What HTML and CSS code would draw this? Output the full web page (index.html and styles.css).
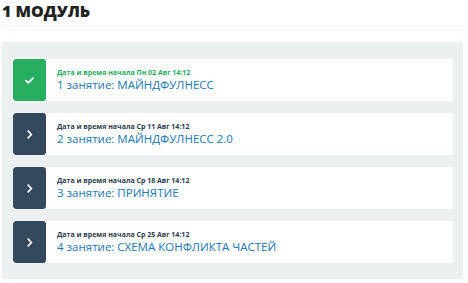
FILE: index.html
```html
<!DOCTYPE html>
<html lang="ru">
<head>
  <meta charset="UTF-8" />
  <title>1 модуль</title>
  <link rel="stylesheet" href="styles.css">
</head>
<body>
  <div class="module">
    <h2 class="module-title">1 МОДУЛЬ</h2>
    <div class="lessons">
      <a class="lesson done" href="#">
        <div class="lesson-icon">
          <svg width="9" height="7" viewBox="0 0 9 7"><path d="M1 3.6l2.3 2.2L8 1.2" fill="none" stroke="#fff" stroke-width="1.8" stroke-linecap="round" stroke-linejoin="round"/></svg>
        </div>
        <div class="lesson-body">
          <div class="lesson-date">Дата и время начала Пн 02 Авг 14:12</div>
          <div class="lesson-name">1 занятие: МАЙНДФУЛНЕСС</div>
        </div>
      </a>
      <a class="lesson" href="#">
        <div class="lesson-icon">
          <svg width="6" height="9" viewBox="0 0 6 9"><path d="M1.2 1.2l3.2 3.3-3.2 3.3" fill="none" stroke="#fff" stroke-width="1.7" stroke-linecap="round" stroke-linejoin="round"/></svg>
        </div>
        <div class="lesson-body">
          <div class="lesson-date">Дата и время начала Ср 11 Авг 14:12</div>
          <div class="lesson-name">2 занятие: МАЙНДФУЛНЕСС 2.0</div>
        </div>
      </a>
      <a class="lesson" href="#">
        <div class="lesson-icon">
          <svg width="6" height="9" viewBox="0 0 6 9"><path d="M1.2 1.2l3.2 3.3-3.2 3.3" fill="none" stroke="#fff" stroke-width="1.7" stroke-linecap="round" stroke-linejoin="round"/></svg>
        </div>
        <div class="lesson-body">
          <div class="lesson-date">Дата и время начала Ср 18 Авг 14:12</div>
          <div class="lesson-name">3 занятие: ПРИНЯТИЕ</div>
        </div>
      </a>
      <a class="lesson" href="#">
        <div class="lesson-icon">
          <svg width="6" height="9" viewBox="0 0 6 9"><path d="M1.2 1.2l3.2 3.3-3.2 3.3" fill="none" stroke="#fff" stroke-width="1.7" stroke-linecap="round" stroke-linejoin="round"/></svg>
        </div>
        <div class="lesson-body">
          <div class="lesson-date">Дата и время начала Ср 25 Авг 14:12</div>
          <div class="lesson-name">4 занятие: СХЕМА КОНФЛИКТА ЧАСТЕЙ</div>
        </div>
      </a>
    </div>
  </div>
</body>
</html>
```

FILE: styles.css
```css
body { margin: 0; padding: 0 5px 0 2px; font-family: "Open Sans", Arial, sans-serif; background: #fff; }
.module-title { margin: 0; padding: 0 0 3px; height: 22px; font-size: 16px; font-weight: 800; line-height: 22px; color: #222; border-bottom: 1px solid #f2f4f4; }
.lessons { margin-top: 16px; background: #ecf0f1; padding: 17px 10px 16px 11px; display: flex; flex-direction: column; gap: 12px; }
.lesson { display: flex; height: 42px; background: #fff; border-radius: 3px; overflow: hidden; text-decoration: none; }
.lesson-icon { width: 33px; flex: none; display: flex; align-items: center; justify-content: center; background: #34495e; border-radius: 3px; }
.done .lesson-icon { background: #27ae60; }
.lesson-body { padding: 9px 0 0 11px; }
.lesson-date { font-size: 7px; font-weight: 700; line-height: 9px; color: #2c3e50; }
.done .lesson-date { color: #27ae60; }
.lesson-name { font-size: 11.5px; line-height: 15px; color: #2077b5; }
```
